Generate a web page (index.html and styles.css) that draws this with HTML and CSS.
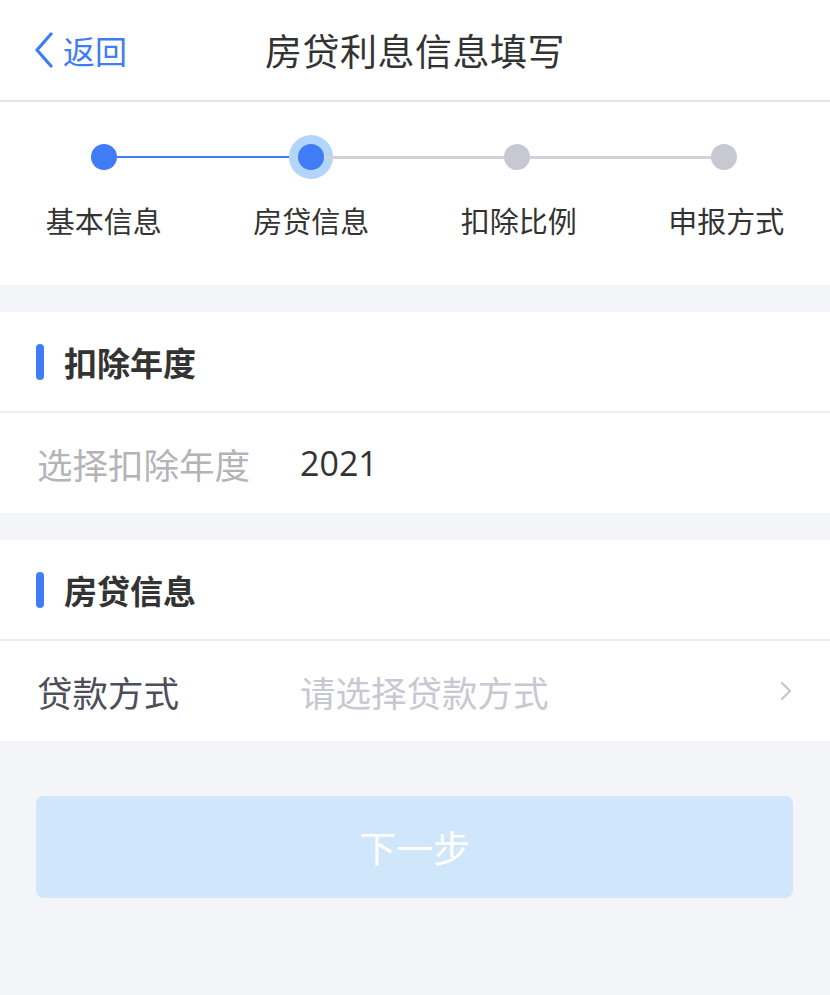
FILE: index.html
```html
<!DOCTYPE html>
<html lang="zh-CN">
<head>
    <meta charset="UTF-8">
    <meta name="viewport" content="width=device-width, initial-scale=1.0">
    <title>房贷利息信息填写</title>
    <link rel="stylesheet" href="styles.css">
</head>
<body>

    <header class="navbar">
        <a class="back" href="#">
            <svg class="back-icon" width="20" height="36" viewBox="0 0 20 36">
                <polyline points="17,2 3,18 17,34" fill="none" stroke="#3f7cf6" stroke-width="3.2" stroke-linecap="round" stroke-linejoin="round"/>
            </svg>
            <span>返回</span>
        </a>
        <h1>房贷利息信息填写</h1>
        <div></div>
    </header>

    <div class="steps">
        <div class="track">
            <span class="dot done"></span>
            <span class="line done"></span>
            <span class="dot current"></span>
            <span class="line"></span>
            <span class="dot"></span>
            <span class="line"></span>
            <span class="dot"></span>
        </div>
        <div class="labels">
            <span>基本信息</span>
            <span>房贷信息</span>
            <span>扣除比例</span>
            <span>申报方式</span>
        </div>
    </div>

    <section class="panel">
        <div class="panel-title"><i></i>扣除年度</div>
        <div class="row">
            <span class="label muted">选择扣除年度</span>
            <span class="value">2021</span>
        </div>
    </section>

    <section class="panel">
        <div class="panel-title"><i></i>房贷信息</div>
        <div class="row">
            <span class="label">贷款方式</span>
            <span class="value placeholder">请选择贷款方式</span>
            <svg class="arrow" width="14" height="22" viewBox="0 0 14 22">
                <polyline points="3,3 11,11 3,19" fill="none" stroke="#c8c8d0" stroke-width="2.4" stroke-linecap="round" stroke-linejoin="round"/>
            </svg>
        </div>
    </section>

    <div class="actions">
        <button class="next" disabled>下一步</button>
    </div>

</body>
</html>
```

FILE: styles.css
```css
body {
    font-family: "Noto Sans CJK SC", "Noto Sans", sans-serif;
    margin: 0;
    padding: 0;
    background-color: #f4f5f9;
    color: #333;
}
.navbar {
    display: grid;
    grid-template-columns: 1fr auto 1fr;
    align-items: center;
    height: 100px;
    background: white;
    border-bottom: 2px solid #e4e4e8;
}
.back {
    display: flex;
    align-items: center;
    gap: 9px;
    padding-left: 34px;
    color: #3f7cf6;
    text-decoration: none;
    font-size: 32px;
    line-height: 40px;
}
.back-icon {
    display: block;
}
.navbar h1 {
    margin: 0;
    font-size: 37px;
    font-weight: normal;
    color: #333;
    letter-spacing: 0.5px;
}
.steps {
    background: white;
    padding: 42px 0 45px;
}
.track {
    display: flex;
    align-items: center;
    padding: 0 93px 0 91px;
}
.dot {
    width: 26px;
    height: 26px;
    border-radius: 50%;
    background: #c8c8d2;
    flex: none;
}
.dot.done,
.dot.current {
    background: #3f7cf6;
}
.dot.current {
    box-shadow: 0 0 0 9px #b3d4fb;
}
.line {
    flex: 1;
    height: 3px;
    background: #d2d2da;
}
.line.done {
    height: 2px;
    background: #3f7cf6;
}
.labels {
    display: grid;
    grid-template-columns: repeat(4, 1fr);
    margin-top: 30px;
    text-align: center;
    font-size: 29px;
    line-height: 40px;
    color: #333;
}
.panel {
    margin-top: 27px;
    background: white;
}
.panel-title {
    display: flex;
    align-items: center;
    gap: 20px;
    height: 99px;
    padding-left: 36px;
    font-size: 33px;
    font-weight: bold;
    color: #333;
    border-bottom: 2px solid #efeff2;
}
.panel-title i {
    width: 8px;
    height: 36px;
    border-radius: 4px;
    background: #3f7cf6;
}
.row {
    display: flex;
    align-items: center;
    height: 100px;
    padding: 0 37px;
    font-size: 35.5px;
}
.label {
    width: 263px;
    color: #4e4e5a;
}
.label.muted {
    color: #b4b4b8;
}
.value {
    flex: 1;
    color: #333;
    font-family: "Open Sans", "Noto Sans CJK SC", sans-serif;
    font-size: 34px;
}
.value.placeholder {
    font-family: "Noto Sans CJK SC", sans-serif;
    font-size: 35.5px;
    color: #c8c8d2;
}
.arrow {
    display: block;
    margin-right: 0;
}
.actions {
    padding: 55px 37px 0 36px;
}
.next {
    display: block;
    width: 100%;
    height: 102px;
    border: none;
    border-radius: 8px;
    background: #d0e6fb;
    color: white;
    font-family: "Noto Sans CJK SC", sans-serif;
    font-size: 37px;
}
```
